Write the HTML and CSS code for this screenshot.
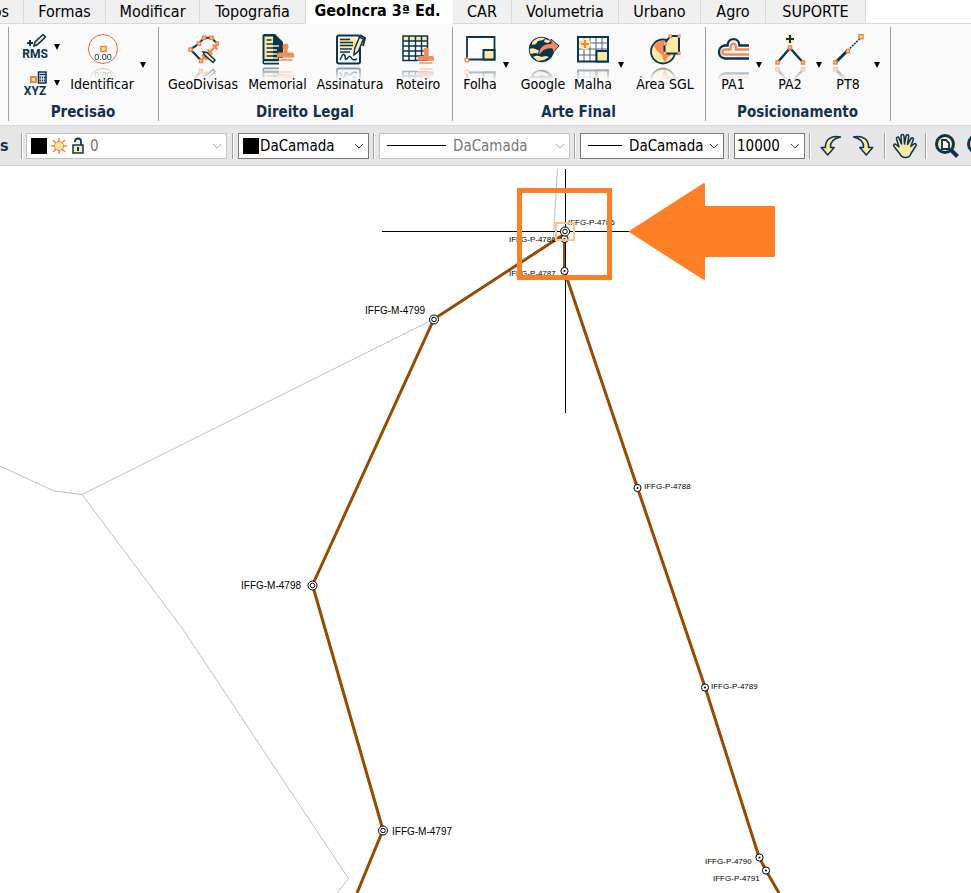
FILE: index.html
```html
<!DOCTYPE html>
<html lang="pt-BR">
<head>
<meta charset="utf-8">
<title>GeoIncra 3ª Ed.</title>
<link rel="stylesheet" href="styles.css">
</head>
<body>
<svg class="defs" aria-hidden="true">
  <defs>
    <symbol id="chevron" viewBox="0 0 10 6"><path d="M1 1l4 4 4-4" fill="none" stroke="currentColor"/></symbol>
    <symbol id="stamp" viewBox="0 0 17 21"><path d="M5.500 4a3.200 3.200 0 0 1 6 0c.5 2-1 3-1 4.500V11H15q2 0 2 2v3H0v-3q0-2 2-2h4.500V8.500C6.500 7 5 6 5.500 4z" fill="#f98a58"/><path d="M1.500 18.500h14" stroke="#f98a58" stroke-width="1.500"/></symbol>
    <symbol id="curve" viewBox="0 0 24 24"><path d="M21.500 3C12 1 6 6 6.500 13.500H2.300L8.700 21l6.500-7.500H11.500C11 8 14.500 4.500 21.500 3z" fill="#fdeaa2" stroke="#0c3350" stroke-width="1.500" stroke-linejoin="round"/></symbol>
  </defs>
</svg>

<nav class="tabs">
  <a href="#" class="tab cut">os</a>
  <a href="#" class="tab">Formas</a>
  <a href="#" class="tab">Modificar</a>
  <a href="#" class="tab">Topografia</a>
  <a href="#" class="tab active">GeoIncra 3ª Ed.</a>
  <a href="#" class="tab">CAR</a>
  <a href="#" class="tab">Volumetria</a>
  <a href="#" class="tab">Urbano</a>
  <a href="#" class="tab">Agro</a>
  <a href="#" class="tab">SUPORTE</a>
</nav>

<section class="ribbon">
  <div class="group precision">
    <div class="tools">
      <div class="stack">
        <button class="small" aria-label="RMS">
          <svg width="26" height="28" viewBox="0 0 26 28"><path d="M5 9h6M8 6v6" stroke="#0b3352" stroke-width="2"/><path d="M12 12l1-4 8-7.500 2.500 2.500-8 7.500z" fill="#fdeaa2" stroke="#0b3352" stroke-width="1.500"/><text x="13" y="24" text-anchor="middle" class="glyph">RMS</text></svg>
          <i class="drop"></i>
        </button>
        <button class="small" aria-label="XYZ">
          <svg width="26" height="28" viewBox="0 0 26 28"><path d="M9 7h5v5H9z" fill="#fdeaa2" stroke="#f5804a" stroke-width="2"/><path d="M16.500 2H24v11h-7.500z" fill="#fff" stroke="#0b3352" stroke-width="1.500"/><path d="M17.500 4.500h6" stroke="#0b3352" stroke-width="1.500"/><path d="M17.500 7.500h6M17.500 10.500h6" stroke="#0b3352" stroke-width="1.800" stroke-dasharray="1.400 .8"/><text x="13" y="25" text-anchor="middle" class="glyph">XYZ</text></svg>
          <i class="drop"></i>
        </button>
      </div>
      <button class="tool">
        <svg class="icon" viewBox="0 0 32 32"><circle cx="17" cy="15" r="14.500" fill="#fefaf8" stroke="#e06a3c"/><path d="M15 12.500h5v5h-5z" fill="#fdeaa2" stroke="#f5804a" stroke-width="1.500"/><text x="17" y="26" text-anchor="middle" class="digits">0.00</text></svg>
        <span>Identificar</span>
      </button>
      <button class="more" aria-label="Mais opções"><i class="drop"></i></button>
    </div>
    <h2>Precisão</h2>
  </div>

  <div class="group legal">
    <div class="tools">
      <button class="tool">
        <svg class="icon" viewBox="0 0 32 32"><path d="M14.500 27L3.500 15.500 12 9.700l5-6h7.500l6 6.300" fill="none" stroke="#0b3352" stroke-width="2"/><g stroke="#f5804a" stroke-width="2"><path d="M25.500 10.500l5 5m0-5l-5 5M20.500 15.500l5 5m0-5l-5 5M15 21l5 5m0-5l-5 5"/></g><g fill="#fdeaa2" stroke="#f5804a" stroke-width="1.500"><path d="M2 14h3v3H2zM10.500 8.200h3v3h-3zM15.500 2.200h3v3h-3zM23 2.200h3v3h-3zM29 8h2.500v3H29zM12.500 25.500h3v3h-3z"/></g><path d="M16 18l4 .5 8 7.500-2 2.500-8.500-7.500z" fill="#fdeaa2" stroke="#0b3352" stroke-width="1.500"/></svg>
        <span>GeoDivisas</span>
      </button>
      <button class="tool">
        <svg class="icon" viewBox="0 0 32 32"><path d="M2.500 0H13l8 8v22.500H2.500q-2 0-2-2V2q0-2 2-2z" fill="#0b3352"/><path d="M2.500 2.500h8.500V25H2.500z" fill="#fdeaa2"/><path d="M4.500 6h5M4.500 10h6.500M4.500 14h13M4.500 18h11M4.500 22h11" stroke="#0b3352" stroke-width="1.600"/><path d="M11 12h6M11 16h4M11 20h4M11 24h5" stroke="#fdeaa2" stroke-width="1.600"/><path d="M2 28h19" stroke="#fff" stroke-width="1.500"/><path d="M17 24h15.500v7H17z" fill="#fafafa"/><use href="#stamp" x="15" y="6" width="17" height="24"/></svg>
        <span>Memorial</span>
      </button>
      <button class="tool">
        <svg class="icon" viewBox="0 0 32 32"><rect x="3" y="1.500" width="23" height="28" rx="2" fill="#fff" stroke="#0b3352" stroke-width="2"/><path d="M5 4h17v10H5z" fill="#fdeaa2"/><path d="M6 5.500h10M6 8.500h13M6 11.500h13M6 15h12M6 18h10" stroke="#0b3352" stroke-width="1.500"/><path d="M6 26c2-4 3-7 4.500-5s0 5 2 4 2-4 4-2 2 4 6.500 2" fill="none" stroke="#0b3352" stroke-width="1.500"/><path d="M20 21l.5-6 5-12 4 2-5 12z" fill="#fdeaa2" stroke="#0b3352" stroke-width="1.500"/><path d="M26 1l5 3-2 8" fill="none" stroke="#0b3352" stroke-width="2"/></svg>
        <span>Assinatura</span>
      </button>
      <button class="tool">
        <svg class="icon" viewBox="0 0 32 32"><path d="M1 2h24.500v24.500H1z" fill="#fff"/><path d="M1 2h24.500v5H1z" fill="#fdeaa2"/><path d="M1 2h24.500v24.500H1zM1 7h24.500M1 12h24.500M1 17h24.500M1 22h24.500M7 2v24.500M13.500 2v24.500M19.500 2v24.500" fill="none" stroke="#0b3352" stroke-width="1.500"/><path d="M15 27h17v5H15z" fill="#fafafa"/><use href="#stamp" x="16" y="11" width="16" height="21"/></svg>
        <span>Roteiro</span>
      </button>
    </div>
    <h2>Direito Legal</h2>
  </div>

  <div class="group art">
    <div class="tools">
      <button class="tool">
        <svg class="icon" viewBox="0 0 32 32"><path d="M3 3h27.500v22.500H3z" fill="#fff" stroke="#0b3352" stroke-width="1.800"/><path d="M19.500 16h11v9.500h-11z" fill="#fdeaa2" stroke="#0b3352" stroke-width="2"/><circle cx="3" cy="26" r="2" fill="#fff" stroke="#f5804a" stroke-width="1.300"/></svg>
        <span>Folha</span>
      </button>
      <button class="more" aria-label="Mais opções"><i class="drop"></i></button>
      <button class="tool">
        <svg class="icon" viewBox="0 0 32 32"><circle cx="14.500" cy="15.500" r="12.700" fill="#0b3352"/><path d="M5 9c2-4 7-6 13-5l-2 2-5 1-2 3-4 1zM18 5l6 2-3 2-4-1zM2.500 15c4-2 6 1 9 1l1 4-4-1-5 1zM6 23c3-1 5-2 8 0l5-1 3 1-5 3-6 1z" fill="#fdeaa2"/><path d="M11.500 22c0-8 4-12.500 12.500-12.500V5l8 7-6.500 7v-4c-7-1-10 2-14 7z" fill="#f98a58" stroke="#0b3352" stroke-width="1"/></svg>
        <span>Google</span>
      </button>
      <button class="tool">
        <svg class="icon" viewBox="0 0 32 32"><path d="M1 3h30v24.500H1z" fill="#fff"/><path d="M7 3v24M13 3v24M19 3v24M25 3v24M1 9h30M1 15h30M1 21h30" stroke="#476580"/><path d="M1 3h30v24.500H1z" fill="none" stroke="#0b3352" stroke-width="2"/><circle cx="8" cy="10" r="5.800" fill="#fdeaa2"/><path d="M8 6v8M4 10h8" stroke="#f5804a" stroke-width="2"/><path d="M19.500 17H31v10.500H19.500z" fill="#fdeaa2" stroke="#0b3352" stroke-width="2"/></svg>
        <span>Malha</span>
      </button>
      <button class="more" aria-label="Mais opções"><i class="drop"></i></button>
      <button class="tool">
        <svg class="icon" viewBox="0 0 32 32"><circle cx="14" cy="17.500" r="12" fill="#fdeaa2" stroke="#0b3352" stroke-width="1.800"/><path d="M5 12c3-5 7-6 10-5v12h5l2 2-4 3-2 5-2-4-1-4-5-4z" fill="#f98a58"/><path d="M21.500 2H30v17.500H15.500v-10z" fill="#fdeaa2" stroke="#0b3352" stroke-width="2"/><path d="M20 1h2.500v2.500H20zM29 1h2v2.500h-2zM29 18h2v2.500h-2zM14.500 18H17v2.500h-2.500zM14.500 8.500H17V11h-2.500z" fill="#fdeaa2" stroke="#f5804a" stroke-width="1.200"/></svg>
        <span>Área SGL</span>
      </button>
    </div>
    <h2>Arte Final</h2>
  </div>

  <div class="group position">
    <div class="tools">
      <button class="tool">
        <svg class="icon" viewBox="0 0 32 32"><path d="M32 11.500H22.500C22 3 11 3 10.500 11.500H8C0 12 0 24 8 24.500h24" fill="none" stroke="#0b3352" stroke-width="2.400"/><path d="M32 15.500H19c1-8-6-8-5.500 0H8c-3.500 0-3.500 5 0 5h24" fill="none" stroke="#f98a58" stroke-width="2.400"/></svg>
        <span>PA1</span>
      </button>
      <button class="more" aria-label="Mais opções"><i class="drop"></i></button>
      <button class="tool">
        <svg class="icon" viewBox="0 0 32 32"><circle cx="16" cy="5" r="5" fill="#fdeaa2"/><path d="M16 1v8M12 5h8" stroke="#0b3352" stroke-width="2"/><path d="M3.500 28.500L16 14l13 14.500" fill="none" stroke="#0b3352" stroke-width="2.400"/><path d="M14.500 12h3v3h-3zM2 27h3v3H2zM27.500 27h3v3h-3z" fill="#fdeaa2" stroke="#f5804a" stroke-width="1.500"/></svg>
        <span>PA2</span>
      </button>
      <button class="more" aria-label="Mais opções"><i class="drop"></i></button>
      <button class="tool">
        <svg class="icon" viewBox="0 0 32 32"><path d="M3.500 28.500L15.700 16.500" stroke="#0b3352" stroke-width="3"/><path d="M15.700 16.500L29 3.500" stroke="#0b3352" stroke-width="1.500" stroke-dasharray="2 1"/><path d="M2 27h3v3H2zM14.500 15.500h3v3h-3zM27 .8h4v4h-4z" fill="#fdeaa2" stroke="#f5804a" stroke-width="1.500"/></svg>
        <span>PT8</span>
      </button>
      <button class="more" aria-label="Mais opções"><i class="drop"></i></button>
    </div>
    <h2>Posicionamento</h2>
  </div>
</section>

<section class="toolbar">
  <strong class="heading">s</strong>
  <i class="sep"></i>
  <label class="combo layer disabled">
    <i class="swatch"></i>
    <svg width="18" height="18" viewBox="0 0 18 18"><path d="M9 1v16M1 9h16M3 3l12 12M15 3L3 15" stroke="#f5804a" stroke-width="1.500"/><circle cx="9" cy="9" r="4.500" fill="#fdeaa2" stroke="#f5804a"/></svg>
    <svg width="14" height="18" viewBox="0 0 14 18"><path d="M4 5V4.500a3 3 0 0 1 6 0V8" fill="none" stroke="#0b3352" stroke-width="1.800"/><rect x="2" y="8" width="10" height="8" fill="#fdeaa2" stroke="#0b3352" stroke-width="1.500"/><path d="M7 10v4" stroke="#0b3352" stroke-width="2"/></svg>
    <select aria-label="Camada" disabled><option>0</option></select>
    <svg class="chevron"><use href="#chevron"/></svg>
  </label>
  <i class="sep"></i>
  <label class="combo color">
    <i class="swatch"></i>
    <select aria-label="Cor"><option>DaCamada</option></select>
    <svg class="chevron"><use href="#chevron"/></svg>
  </label>
  <i class="sep"></i>
  <label class="combo line disabled">
    <i class="rule"></i>
    <select aria-label="Tipo de linha" disabled><option>DaCamada</option></select>
    <svg class="chevron"><use href="#chevron"/></svg>
  </label>
  <i class="sep"></i>
  <label class="combo weight">
    <i class="rule short"></i>
    <select aria-label="Espessura"><option>DaCamada</option></select>
    <svg class="chevron"><use href="#chevron"/></svg>
  </label>
  <i class="sep"></i>
  <label class="combo scale">
    <select aria-label="Escala"><option>10000</option></select>
    <svg class="chevron"><use href="#chevron"/></svg>
  </label>
  <i class="sep"></i>
  <div class="actions">
    <button aria-label="Desfazer"><svg width="24" height="24"><use href="#curve"/></svg></button>
    <button aria-label="Refazer"><svg class="mirror" width="24" height="24"><use href="#curve"/></svg></button>
  </div>
  <i class="sep"></i>
  <button aria-label="Mover vista"><svg width="26" height="26" viewBox="0 0 26 26"><path d="M8 21L2 13.500c-1-1.500.5-3 2-2l3 2.500L4.500 6c-.5-2 2-2.500 2.500-1l2.500 6-.5-8c0-2 2.700-2 3 0l.5 8 1.500-8c.5-2 3-1.500 2.700.3L15.500 11.500l3.500-6c1-1.500 3-.5 2.300 1l-2.500 7 3-2.500c1.500-1 3.200.3 2 2L19 20.500c-1 3-2 4-5.500 4S9 23.500 8 21z" fill="#fdeaa2" stroke="#0c3350" stroke-width="1.500" stroke-linejoin="round"/></svg></button>
  <i class="sep"></i>
  <div class="zooms">
    <button aria-label="Zoom extensão"><svg width="26" height="26" viewBox="0 0 26 26"><circle cx="11" cy="11" r="8.500" fill="#fdeaa2" stroke="#0b3352" stroke-width="3"/><path d="M8 7h4l3 3v6H8z" fill="#fff" stroke="#0b3352" stroke-width="1.800"/><path d="M17 17l6.500 6.500" stroke="#0b3352" stroke-width="4"/></svg></button>
    <button aria-label="Zoom"><svg width="26" height="26" viewBox="0 0 26 26"><circle cx="11" cy="11" r="8.500" fill="#fdeaa2" stroke="#0b3352" stroke-width="3"/><path d="M17 17l6.500 6.500" stroke="#0b3352" stroke-width="4"/></svg></button>
  </div>
</section>

<main class="canvas">
  <svg viewBox="0 166 971 727" preserveAspectRatio="xMidYMin slice" role="img" aria-label="Perímetro do imóvel">
    <defs>
      <g id="marco"><circle r="4.500" fill="#fff" stroke="#000"/><circle r="2.300" fill="#fff" stroke="#000"/></g>
      <g id="ponto"><circle r="3.600" fill="#fff" stroke="#000"/><circle r="1"/></g>
    </defs>
    <g class="bounds">
      <path d="M557.500 169L553.500 236M434 319L82 494.500 54 491 0 466M82 494.500L182 628 348.500 878.500 337 893"/>
    </g>
    <path class="parcel" d="M357 893L383 830 312.500 585 434 319 564.500 234V271L637.500 488 705 687 759 857 766 870.500 779 893"/>
    <path class="cross" d="M382 231.500H631M565.500 169V413"/>
    <use href="#marco" x="434" y="319.500"/><use href="#marco" x="312.500" y="585.500"/><use href="#marco" x="383" y="830.500"/>
    <use href="#ponto" x="564.500" y="239"/><use href="#marco" x="565" y="231.500"/><use href="#ponto" x="564.500" y="271"/>
    <use href="#ponto" x="637.500" y="488"/><use href="#ponto" x="705" y="687.500"/><use href="#ponto" x="759.500" y="857.500"/><use href="#ponto" x="766" y="870.500"/>
    <g class="m-label"><text x="365" y="314">IFFG-M-4799</text><text x="241" y="589">IFFG-M-4798</text><text x="392" y="835">IFFG-M-4797</text></g>
    <g class="p-label"><text x="568" y="225">IFFG-P-4785</text><text x="509" y="242">IFFG-P-4786</text><text x="509" y="276">IFFG-P-4787</text><text x="644" y="489">IFFG-P-4788</text><text x="711" y="689">IFFG-P-4789</text><text x="705" y="864">IFFG-P-4790</text><text x="713" y="881">IFFG-P-4791</text></g>
    <rect x="556" y="223" width="18" height="17" fill="none" stroke="#ffc186" stroke-width="2"/>
    <rect x="519.500" y="190.500" width="90" height="87" fill="none" stroke="#ff7f27" stroke-width="5"/>
    <path d="M630 231.500L704 184V207H774V256H704V279z" fill="#ff7f27" stroke="#ff7f27" stroke-width="2" stroke-linejoin="round"/>
  </svg>
</main>
</body>
</html>
```
FILE: styles.css
```css
* { box-sizing: border-box; }

body {
  margin: 0;
  min-height: 100vh;
  display: flex;
  flex-direction: column;
  overflow: hidden;
  background: #fff;
  color: #000;
  font: 15px/20px "DejaVu Sans Condensed", "Noto Sans", sans-serif;
}

.defs { display: none; }
svg { display: block; flex: none; }

button {
  border: 0;
  padding: 0;
  background: none;
  color: inherit;
  font: inherit;
}

/* Tabs */
.tabs {
  display: flex;
  height: 24px;
  border-bottom: 1px solid #d9d9d9;
  font-size: 16px;
}
.tab {
  flex: none;
  display: flex;
  align-items: center;
  justify-content: center;
  width: 106px;
  height: 23px;
  border-right: 1px solid #d9d9d9;
  background: #f0f0f0;
  color: #000;
  text-decoration: none;
  white-space: nowrap;
}
.tab:nth-child(1) { width: 24px; }
.tab:nth-child(2) { width: 82px; }
.tab:nth-child(3) { width: 94px; }
.tab:nth-child(5) { width: 147px; }
.tab:nth-child(6) { width: 59px; }
.tab:nth-child(7) { width: 107px; }
.tab:nth-child(8) { width: 82px; }
.tab:nth-child(9) { width: 65px; }
.tab:nth-child(10) { width: 100px; }
.tab.cut { justify-content: flex-end; padding-right: 14px; }
.tab.active {
  height: 24px;
  padding: 0 4px 2px 0;
  border-right: 0;
  background: #fff;
  font-weight: bold;
}

/* Ribbon */
.ribbon {
  display: flex;
  padding: 3px 0 4px 8px;
  border-bottom: 1px solid #d9d9d9;
  background: #fafafa;
}
.group {
  flex: none;
  height: 94px;
  padding-top: 7px;
  border-left: 1px solid #a0a0a0;
  font-size: 14px;
}
.group:last-child { border-right: 1px solid #a0a0a0; }
.group h2 {
  margin: 0;
  padding: 1px 1px 0 0;
  color: #17304f;
  font-size: 15px;
  line-height: 20px;
  text-align: center;
}
.tools { display: grid; height: 67px; }
.precision { width: 150px; }
.legal { width: 294px; }
.art { width: 253px; }
.position { width: 186px; }
.precision .tools { grid-template-columns: 58px 70px 12px; }
.legal .tools { grid-template-columns: 80px 69px 76px 60px; padding-left: 4px; }
.art .tools { grid-template-columns: 46px 6px 68px 32px 24px 64px; padding-left: 4px; }
.position .tools { grid-template-columns: 46px 6px 56px 2px 56px 2px; padding-left: 4px; }

.tool {
  display: flex;
  flex-direction: column;
  align-items: center;
  gap: 8px;
  white-space: nowrap;
}
.tool span { position: relative; }
.icon {
  width: 32px;
  height: 32px;
  -webkit-box-reflect: below 0 linear-gradient(transparent 55%, rgba(0, 0, 0, .55));
}
.stack { display: grid; gap: 8px; padding-left: 13px; align-content: start; }
.small { display: flex; align-items: center; gap: 6px; }
.small .drop { margin-bottom: 2px; }
.more { display: flex; justify-content: center; padding-top: 28px; }
.drop {
  flex: none;
  width: 0;
  height: 0;
  border: solid transparent;
  border-width: 6px 3px 0;
  border-top-color: #000;
}
.glyph { font: bold 12px Roboto, sans-serif; fill: #0b3352; }
.digits { font: 9px "Liberation Sans", sans-serif; fill: #0b3352; }

/* Property bar */
.toolbar {
  display: flex;
  align-items: center;
  height: 40px;
  border-bottom: 1px solid #d0d0d0;
  background: #e6e6e6;
  overflow: hidden;
}
.heading { flex: none; width: 21px; color: #17304f; font-size: 16px; }
.sep {
  flex: none;
  width: 2px;
  height: 26px;
  border-left: 1px solid #a0a0a0;
  border-right: 1px solid #fff;
}
.combo {
  flex: none;
  display: flex;
  align-items: center;
  height: 26px;
  margin: 0 4px;
  padding: 0 4px;
  border: 1px solid #7a7a7a;
  background: #fff;
}
.combo.disabled { border-color: #c4c4c4; color: #777; }
.combo select {
  flex: 1;
  min-width: 0;
  padding: 0;
  border: 0;
  appearance: none;
  background: none;
  color: inherit;
  font: inherit;
  opacity: 1;
}
.combo.layer { width: 201px; gap: 3px; margin: 0 5px 0 3px; padding-left: 4px; }
.color { width: 131px; }
.color select { padding-left: 1px; }
.line { width: 191px; }
.weight { width: 144px; }
.combo.scale { width: 71px; padding-left: 2px; }
.layer select { margin-left: 2px; }
.swatch { flex: none; width: 16px; height: 16px; background: #000; }
.rule { flex: none; width: 59px; height: 1px; margin: 0 7px 0 3px; background: #000; }
.rule.short { width: 34px; }
.chevron { width: 10px; height: 6px; color: #444; }
.disabled .chevron { color: #aaa; }
.actions { display: flex; gap: 8px; padding: 0 9px 0 8px; }
.mirror { transform: scaleX(-1); }
.toolbar > button { padding: 0 7px 0 6px; }
.zooms { display: flex; gap: 6px; padding-left: 7px; }

/* Drawing area */
.canvas { flex: 1; display: flex; min-height: 0; }
.canvas svg { width: 100%; height: auto; font-family: "Liberation Sans", sans-serif; }
.bounds { fill: none; stroke: #c0c0c0; }
.parcel { fill: none; stroke: #964b00; stroke-width: 3; }
.cross { fill: none; stroke: #000; }
.m-label { font-size: 10px; }
.p-label { font-size: 8px; }
```
